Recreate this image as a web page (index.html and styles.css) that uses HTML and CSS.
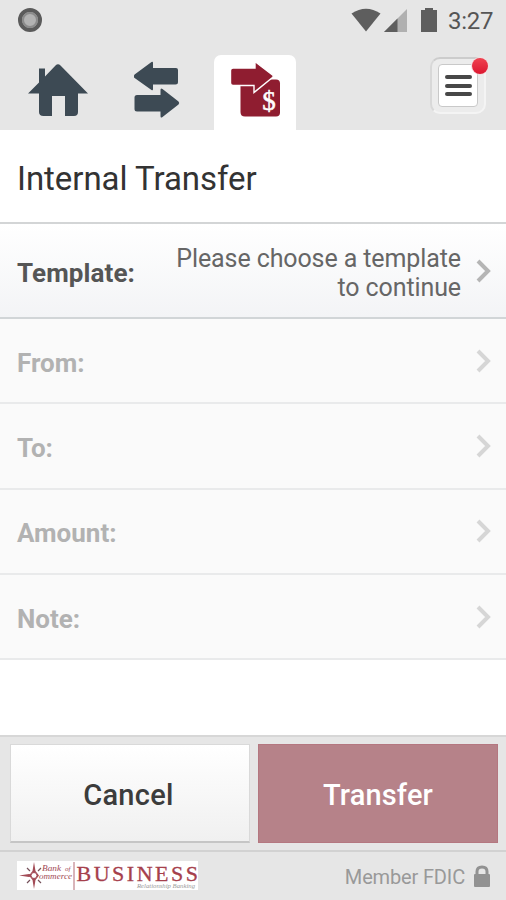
FILE: index.html
```html
<!DOCTYPE html>
<html lang="en">
<head>
<meta charset="utf-8">
<title>Internal Transfer</title>
<link rel="stylesheet" href="styles.css">
</head>
<body>
<div class="app">
  <header class="top">
    <div class="status">
      <svg class="record" width="26" height="26" viewBox="0 0 26 26"><circle cx="13" cy="13" r="10" fill="#aaa" stroke="#5b5b5b" stroke-width="4"/><circle cx="13" cy="13" r="7" fill="#b2b2b2" stroke="#8b8b8b" stroke-width="2"/></svg>
      <div class="system">
        <svg width="88" height="26" viewBox="351 7 88 26">
          <path d="M351.500 13.500Q366 4 380.500 13.500L366 31.500Z" fill="#5e5e5e"/>
          <path d="M407 9V32H384Z" fill="#b0b0b0"/><path d="M397.500 18.500V32H384Z" fill="#5e5e5e"/>
          <path d="M421 10H425V8H433V10H437V32H421Z" fill="#5e5e5e"/>
        </svg>
        <span class="time">3:27</span>
      </div>
    </div>
    <nav class="tabs">
      <svg class="home" width="60" height="54" viewBox="28 63 60 54" fill="#3d4a54"><path d="M28 93.500L39 82.500V68.500H45V76.500L55.500 65.500Q58 63 60.500 65.500L88 93.500H78V112Q78 116 74 116H65V96H52V116H43.500Q39 116 39 112V93.500Z"/></svg>
      <svg class="swap" width="46" height="58" viewBox="134 61 46 58" fill="#3d4a54"><path d="M134.600 74.500L151.500 62Q153 61 153 63V68H176Q178 68 178 70V82Q178 84.500 175.500 84.500H153V89Q153 91 151.500 90L134.600 78Q133 76.500 134.600 74.500Z"/><path d="M137 95H160.500V90Q160.500 87.500 162.500 89L178.500 101.500Q180 103 178.500 104.500L162.500 117Q160.500 118.500 160.500 116V111.500H137Q134.500 111.500 134.500 109V97.500Q134.500 95 137 95Z"/></svg>
      <div class="tab">
        <svg width="54" height="58" viewBox="229 61 54 58"><path d="M244 79.500H276Q280 79.500 280 83.500V112.500Q280 116.500 276 116.500H245Q240.500 116.500 240.500 112V79.500Z" fill="#8f1d30"/><path d="M233 68H255V63Q255 61.500 256.500 62.700L272.500 75Q274 76.200 272.500 77.500L254 92.500V85.500H233Q230.500 85.500 230.500 83V70.500Q230.500 68 233 68Z" fill="#8f1d30" stroke="#fff" stroke-width="1.400"/><text class="dollar" x="269" y="109.500" text-anchor="middle">$</text></svg>
      </div>
      <button class="menu" aria-label="Menu">
        <span class="menu-face"><i></i><i></i><i></i></span>
        <span class="badge"></span>
      </button>
    </nav>
  </header>
  <h1>Internal Transfer</h1>
  <main>
    <div class="row active"><b class="label template">Template:</b><span class="value">Please choose a template<br>to continue</span><svg class="chevron" width="17" height="26" viewBox="0 0 17 26"><path d="M3 3L13 13L3 23"/></svg></div>
    <div class="row"><b class="label">From:</b><svg class="chevron" width="17" height="26" viewBox="0 0 17 26"><path d="M3 3L13 13L3 23"/></svg></div>
    <div class="row"><b class="label">To:</b><svg class="chevron" width="17" height="26" viewBox="0 0 17 26"><path d="M3 3L13 13L3 23"/></svg></div>
    <div class="row"><b class="label">Amount:</b><svg class="chevron" width="17" height="26" viewBox="0 0 17 26"><path d="M3 3L13 13L3 23"/></svg></div>
    <div class="row"><b class="label">Note:</b><svg class="chevron" width="17" height="26" viewBox="0 0 17 26"><path d="M3 3L13 13L3 23"/></svg></div>
  </main>
  <div class="actions"><button class="cancel">Cancel</button><button class="transfer">Transfer</button></div>
  <footer>
    <svg class="logo" width="182" height="30" viewBox="0 0 182 30">
      <rect width="181" height="29" fill="#fff"/>
      <g fill="#a34b56"><path d="M17 1L18.500 10L22 14.500L18.500 19L17 28L15.500 19L12 14.500L15.500 10Z"/><path d="M2 14.500L12 13L20 14.500L12 16Z"/></g>
      <path d="M10 7L13 10M24 7L21 10M10 22L13 19M24 22L21 19" stroke="#75505a" stroke-width="1.200"/>
      <circle cx="17" cy="14.500" r="3" fill="#fff" stroke="#a34b56"/>
      <g class="bank"><text x="25" y="10" textLength="19" lengthAdjust="spacingAndGlyphs">Bank</text><text class="of" x="48" y="10">of</text><text x="22" y="18" textLength="33" lengthAdjust="spacingAndGlyphs">ommerce</text></g>
      <path d="M57 1V29" stroke="#b36b74"/>
      <text class="business" x="59.500" y="20" textLength="121.500">BUSINESS</text>
      <text class="tagline" x="120" y="26.800" textLength="58" lengthAdjust="spacingAndGlyphs">Relationship Banking</text>
    </svg>
    <div class="member"><span>Member FDIC</span><svg width="18" height="23" viewBox="0 0 18 23"><path d="M4 10V6.500Q4 2 9 2T14 6.500V10" fill="none" stroke="#929292" stroke-width="3"/><rect x="1" y="9" width="16" height="13" rx="1" fill="#929292"/></svg></div>
  </footer>
</div>
</body>
</html>
```
FILE: styles.css
```css
* { box-sizing: border-box; }
body { margin: 0; font-family: Roboto, "Liberation Sans", sans-serif; color: #333; background: #fff; }
svg { display: block; flex: none; }
button { border: 0; padding: 0; font: inherit; }
.app { width: 506px; height: 900px; display: flex; flex-direction: column; overflow: hidden; }
.top { height: 130px; flex: none; background: #e6e6e6; }
.status { height: 41px; display: flex; justify-content: space-between; padding: 7px 12px 0 17px; }
.system { display: flex; gap: 9px; align-items: flex-start; }
.time { font-size: 24px; line-height: 28px; color: #555; width: 46px; white-space: nowrap; letter-spacing: -.3px; }
.tabs { height: 89px; display: flex; align-items: flex-start; }
.home { margin: 22px 0 0 28px; }
.swap { margin: 20px 0 0 46px; }
.tab { width: 82px; height: 75px; margin: 14px 0 0 34px; padding: 6px 0 0 15px; background: #fff; border-radius: 7px 7px 0 0; }
.dollar { font: 27px "Liberation Serif", serif; fill: #fff; stroke: #fff; stroke-width: .5px; }
.menu { position: relative; width: 56px; height: 57px; margin: 16px 0 0 134px; padding: 5px 6px; border-radius: 10px; background: #ececec; border: 2px solid #f4f4f4; border-top-color: #ccc; border-left-color: #d8d8d8; }
.menu-face { display: flex; flex-direction: column; align-items: center; justify-content: center; gap: 4.500px; width: 40px; height: 43px; border: 1px solid #c9c9c9; border-radius: 4px; background: #fff; }
.menu-face i { width: 27px; height: 4px; border-radius: 2px; background: #484848; }
.badge { position: absolute; right: -4px; top: -1px; width: 16px; height: 16px; border-radius: 50%; background: linear-gradient(#f04250, #dc1730); box-shadow: 0 0 0 1px #f5dfe0; }
h1 { height: 92px; flex: none; margin: 0; padding: 3px 0 0 17px; line-height: 92px; font-size: 33px; font-weight: 400; white-space: nowrap; letter-spacing: -.05px; }
main { height: 605px; flex: 1; }
.row { height: 85.300px; display: flex; align-items: center; padding: 0 14px 0 17px; background: #fafafa; border-bottom: 2px solid #e9eaeb; }
.row.active { height: 97px; background: linear-gradient(#fff, #f3f4f6); border-top: 2px solid #d3d5d6; border-bottom-color: #d1d5d7; }
.label { font-size: 26px; font-weight: 700; color: #b2b2b2; margin-top: 4px; }
.template { color: #555; margin-top: 4px; letter-spacing: .1px; }
.value { margin-left: auto; text-align: right; font-size: 25px; letter-spacing: -.1px; line-height: 29px; color: #666; white-space: nowrap; margin-right: 14px; margin-top: 4px; }
.chevron { margin-left: auto; fill: none; stroke: #d6d6d6; stroke-width: 4; }
.active .chevron { margin-left: 0; stroke: #b5b5b5; }
.actions { height: 117px; flex: none; display: flex; gap: 8px; padding: 7px 8px 9px 10px; background: #e6e6e6; border-top: 2px solid #d7d7d7; border-bottom: 2px solid #d2d2d2; }
.actions button { width: 240px; height: 99px; font-size: 29px; font-weight: 500; padding-top: 2px; }
.actions .cancel { color: #3c3c3c; background: linear-gradient(#fff, #f0f0f0); border: 1px solid #d9d9d9; border-bottom: 2px solid #c5c5c5; padding: 3px 3px 0 0; letter-spacing: .3px; }
.transfer { color: #fff; background: #b68289; border: 1px solid #b47780; letter-spacing: .15px; }
footer { height: 48px; flex: none; display: flex; justify-content: space-between; padding: 9px 15px 0 17px; background: #e6e6e6; }
.bank { font: italic 9px "Liberation Serif", serif; fill: #a34b56; }
.bank .of { font-size: 7px; }
.business { font: 22px "Liberation Serif", serif; fill: #a6404c; stroke: #a6404c; stroke-width: .3px; }
.tagline { font: italic 7px "Liberation Serif", serif; fill: #999; }
.member { display: flex; gap: 8px; align-items: flex-start; color: #999; font-size: 20px; letter-spacing: -.15px; line-height: 33px; white-space: nowrap; }
.member svg { margin-top: 4px; }
```
